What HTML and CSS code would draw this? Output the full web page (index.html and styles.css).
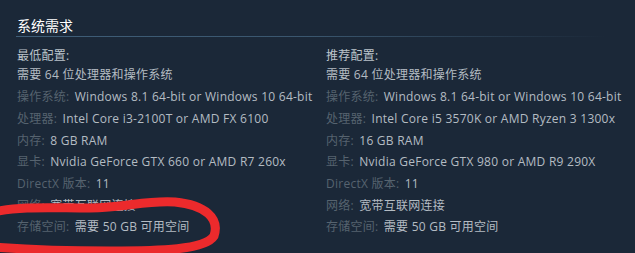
FILE: index.html
```html
<!DOCTYPE html>
<html lang="zh-CN">
<head>
<meta charset="utf-8">
<title>系统需求</title>
<link rel="stylesheet" href="styles.css">
</head>
<body>
<div class="sysreq">
  <h2 class="sysreq-title">系统需求</h2>
  <div class="sysreq-cols">
    <div class="col">
      <div class="col-head">最低配置:</div>
      <ul class="req-list">
        <li>需要 64 位处理器和操作系统</li>
        <li><span class="lbl">操作系统:</span> Windows 8.1 64-bit or Windows 10 64-bit</li>
        <li><span class="lbl">处理器:</span> Intel Core i3-2100T or AMD FX 6100</li>
        <li><span class="lbl">内存:</span> 8 GB RAM</li>
        <li><span class="lbl">显卡:</span> Nvidia GeForce GTX 660 or AMD R7 260x</li>
        <li><span class="lbl">DirectX 版本:</span> 11</li>
        <li><span class="lbl">网络:</span> 宽带互联网连接</li>
        <li><span class="lbl">存储空间:</span> 需要 50 GB 可用空间</li>
      </ul>
    </div>
    <div class="col">
      <div class="col-head">推荐配置:</div>
      <ul class="req-list">
        <li>需要 64 位处理器和操作系统</li>
        <li><span class="lbl">操作系统:</span> Windows 8.1 64-bit or Windows 10 64-bit</li>
        <li><span class="lbl">处理器:</span> Intel Core i5 3570K or AMD Ryzen 3 1300x</li>
        <li><span class="lbl">内存:</span> 16 GB RAM</li>
        <li><span class="lbl">显卡:</span> Nvidia GeForce GTX 980 or AMD R9 290X</li>
        <li><span class="lbl">DirectX 版本:</span> 11</li>
        <li><span class="lbl">网络:</span> 宽带互联网连接</li>
        <li><span class="lbl">存储空间:</span> 需要 50 GB 可用空间</li>
      </ul>
    </div>
  </div>
</div>
<svg class="annotation" width="635" height="253" viewBox="0 0 635 253" aria-hidden="true">
  <path d="M -6 212 C 20 206, 50 208, 90 208 C 125 208, 145 200, 175 202 C 205 205, 220 218, 214 236 C 205 250, 160 251, 110 251 C 60 251, 20 249, -6 247" fill="none" stroke="#ec2a2c" stroke-width="9" stroke-linecap="round"/>
</svg>
</body>
</html>
```

FILE: styles.css
```css
html, body {
  margin: 0;
  padding: 0;
}
body {
  background: #1b2838;
  width: 635px;
  height: 253px;
  overflow: hidden;
  position: relative;
  font-family: "Open Sans", "Noto Sans CJK SC", sans-serif;
  font-size: 12px;
  letter-spacing: 0.25px;
  color: #b4bcc3;
}
.sysreq {
  padding: 0 0 0 16px;
}
.sysreq-title {
  margin: 0;
  padding: 16px 0 3px 1px;
  font-size: 14px;
  line-height: 18px;
  font-weight: normal;
  letter-spacing: 0;
  color: #ffffff;
  font-family: "Noto Sans CJK SC", sans-serif;
  position: relative;
}
.sysreq-title::after {
  content: "";
  display: block;
  position: absolute;
  left: 0;
  bottom: 0;
  width: 590px;
  height: 1px;
  background: linear-gradient(to right, #3f5e78 0%, #3a566e 50%, rgba(58, 86, 110, 0) 100%);
}
.sysreq-cols {
  display: grid;
  grid-template-columns: 309px 1fr;
  margin-top: 10px;
}
.col {
  padding-left: 1px;
}
.col-head {
  line-height: 17.4px;
  color: #bcc4cb;
}
.req-list {
  list-style: none;
  margin: 0;
  padding: 0;
}
.req-list li {
  line-height: 21.7px;
  white-space: nowrap;
}
.lbl {
  color: #56636f;
  margin-right: 2px;
}
.annotation {
  position: absolute;
  left: 0;
  top: 0;
  pointer-events: none;
}
```
